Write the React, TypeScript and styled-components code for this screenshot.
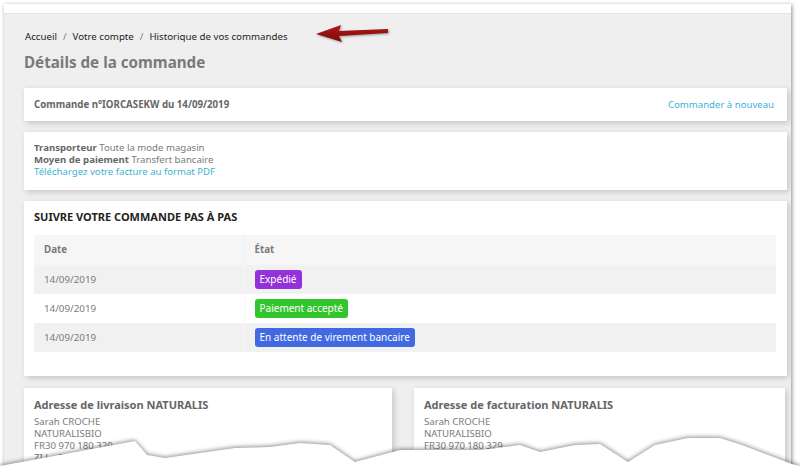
import React from 'react'
import styled, { createGlobalStyle } from 'styled-components'

const GlobalStyle = createGlobalStyle`
  html, body {
    margin: 0;
    padding: 0;
    background: #ffffff;
    font-family: "Noto Sans", "Open Sans", sans-serif;
  }
  * { box-sizing: border-box; }
`

const Page = styled.div`
  position: relative;
  width: 800px;
  height: 472px;
  overflow: hidden;
  background: #ffffff;
  padding: 4px 9px 0 4px;
`

const Frame = styled.div`
  height: 520px;
  overflow: hidden;
  background: #efefef;
  box-shadow: 1px 1px 4px rgba(0, 0, 0, 0.45);
  display: flex;
  flex-direction: column;
`

const TopStrip = styled.div`
  height: 10px;
  background: #ffffff;
  border-bottom: 1px solid #e4e4e4;
`

const Content = styled.div`
  padding: 15px 4px 0 20px;
  display: flex;
  flex-direction: column;
  font-size: 9.6px;
  line-height: 12px;
`

const Breadcrumb = styled.nav`
  font-size: 9.7px;
  line-height: 16px;
  color: #232323;
  padding-left: 1px;
  span.sep {
    color: #7a7a7a;
    margin: 0 6px;
  }
`

const Title = styled.h1`
  margin: 7px 0 16px;
  font-size: 15.2px;
  line-height: 20px;
  font-weight: 700;
  color: #7a7a7a;
`

const Card = styled.section<{ pad?: string }>`
  background: #ffffff;
  box-shadow: 2px 2px 6px rgba(0, 0, 0, 0.18);
  padding: ${(p) => p.pad || '10px'};
  margin-bottom: 11px;
`

const HeaderCard = styled(Card)`
  height: 33px;
  display: flex;
  align-items: center;
  justify-content: space-between;
`

const OrderRef = styled.strong`
  font-size: 9.7px;
  color: #666666;
`

const Link = styled.a<{ block?: boolean }>`
  display: ${(p) => (p.block ? 'block' : 'inline')};
  color: #3cb2d4;
  text-decoration: none;
  font-size: 9.6px;
  line-height: 12px;
`

const InfoLine = styled.div`
  font-size: 9.6px;
  line-height: 12px;
  color: #7a7a7a;
  b { color: #666666; }
`

const SectionTitle = styled.h3`
  margin: 0 0 11px;
  font-size: 11px;
  line-height: 14px;
  font-weight: 700;
  color: #232323;
  text-transform: uppercase;
`

const Table = styled.table`
  width: 100%;
  border-collapse: collapse;
  font-size: 9.8px;
  color: #7a7a7a;
`

const Row = styled.tr<{ shade: string; h: number }>`
  background: ${(p) => p.shade};
  height: ${(p) => p.h}px;
`

const Th = styled.th`
  text-align: left;
  font-weight: 700;
  padding: 0 10px;
  color: #7a7a7a;
  &:first-child { width: 210px; border-right: 1px solid #f1f1f1; }
`

const Td = styled.td`
  padding: 0 10px;
  &:first-child { border-right: 1px solid #f6f6f6; }
`

const Badge = styled.span<{ color: string }>`
  display: inline-block;
  background: ${(p) => p.color};
  color: #ffffff;
  font-size: 10px;
  line-height: 19px;
  height: 19px;
  padding: 0 5px;
  border-radius: 3px;
`

const AddressRow = styled.div`
  display: grid;
  grid-template-columns: 368px 371px;
  column-gap: 22px;
  margin-top: 1px;
`

const AddressTitle = styled.h4`
  margin: 0 0 3px;
  font-size: 11px;
  line-height: 16px;
  font-weight: 700;
  color: #666666;
`

const Arrow = styled.svg`
  position: absolute;
  left: 310px;
  top: 20px;
  filter: drop-shadow(1px 1px 1px rgba(0, 0, 0, 0.35));
`

const Tear = styled.svg`
  position: absolute;
  left: 0;
  bottom: 0;
  filter: drop-shadow(0 -1px 2px rgba(0, 0, 0, 0.45));
`

const steps = [
  { date: '14/09/2019', label: 'Expédié', color: '#9332d8', shade: '#f1f1f1' },
  { date: '14/09/2019', label: 'Paiement accepté', color: '#32c52c', shade: '#ffffff' },
  { date: '14/09/2019', label: 'En attente de virement bancaire', color: '#4169e1', shade: '#f1f1f1' },
]

const addressLines = ['Sarah CROCHE', 'NATURALISBIO', 'FR30 970 180 329', 'ZI La Ballastière']

const App = () => {
  return (
    <Page>
      <GlobalStyle />
      <Frame>
        <TopStrip />
        <Content>
          <Breadcrumb>
            Accueil<span className="sep">/</span>Votre compte<span className="sep">/</span>Historique de vos commandes
          </Breadcrumb>
          <Title>Détails de la commande</Title>

          <HeaderCard pad="0 13px 0 10px">
            <OrderRef>Commande n°IORCASEKW du 14/09/2019</OrderRef>
            <Link href="#">Commander à nouveau</Link>
          </HeaderCard>

          <Card pad="10px 10px 12px">
            <InfoLine><b>Transporteur</b> Toute la mode magasin</InfoLine>
            <InfoLine><b>Moyen de paiement</b> Transfert bancaire</InfoLine>
            <Link href="#" block>Téléchargez votre facture au format PDF</Link>
          </Card>

          <Card pad="9px 11px 24px 10px">
            <SectionTitle>Suivre votre commande pas à pas</SectionTitle>
            <Table>
              <thead>
                <Row shade="#f6f6f6" h={30}>
                  <Th>Date</Th>
                  <Th>État</Th>
                </Row>
              </thead>
              <tbody>
                {steps.map((s) => (
                  <Row key={s.label} shade={s.shade} h={29}>
                    <Td>{s.date}</Td>
                    <Td><Badge color={s.color}>{s.label}</Badge></Td>
                  </Row>
                ))}
              </tbody>
            </Table>
          </Card>

          <AddressRow>
            <Card pad="9px 10px">
              <AddressTitle>Adresse de livraison NATURALIS</AddressTitle>
              {addressLines.map((l) => (
                <InfoLine key={l}>{l}</InfoLine>
              ))}
            </Card>
            <Card pad="9px 10px">
              <AddressTitle>Adresse de facturation NATURALIS</AddressTitle>
              {addressLines.map((l) => (
                <InfoLine key={l}>{l}</InfoLine>
              ))}
            </Card>
          </AddressRow>
        </Content>
      </Frame>

      <Arrow width="90" height="30" viewBox="0 0 90 30">
        <defs>
          <linearGradient id="arrowFill" x1="0" y1="0" x2="0" y2="1">
            <stop offset="0" stopColor="#b01818" />
            <stop offset="1" stopColor="#7e0a0a" />
          </linearGradient>
        </defs>
        <polygon points="6,14 31,5 29,11 78,9 78,13 29,16 32,22" fill="url(#arrowFill)" />
      </Arrow>

      <Tear width="800" height="40" viewBox="0 432 800 40">
        <polygon
          fill="#ffffff"
          points="0,472 0,466 5,465 135,441 147,455 165,458 200,453 235,448 270,447 300,443 330,445 355,462 400,450 480,450 520,445 540,452 575,445 600,444 628,462 655,445 688,438 720,438 742,445 792,464 800,466 800,472"
        />
      </Tear>
    </Page>
  )
}

export default App
